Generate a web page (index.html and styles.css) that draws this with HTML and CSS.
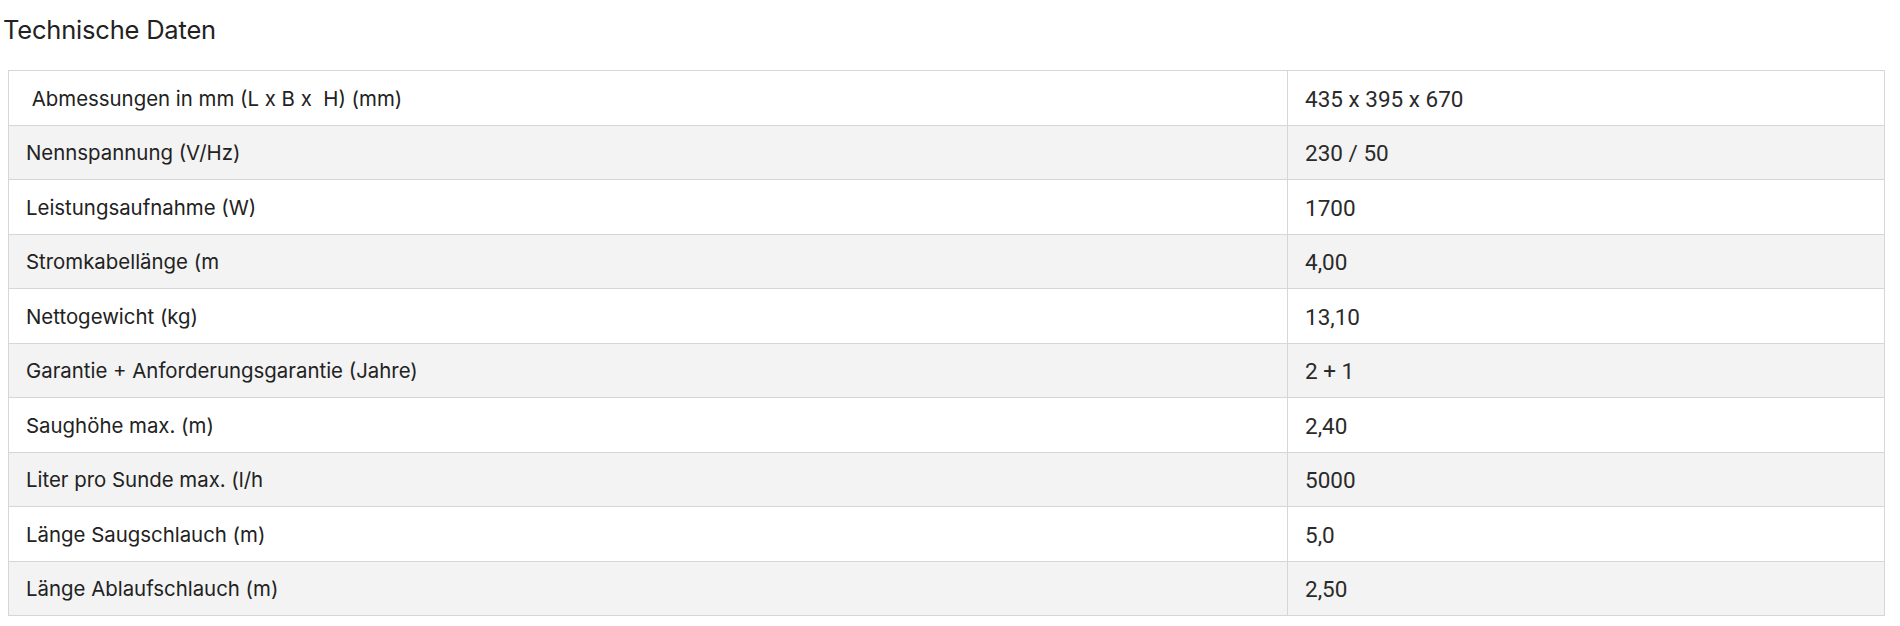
FILE: index.html
```html
<!DOCTYPE html>
<html lang="de">
<head>
<meta charset="utf-8">
<title>Technische Daten</title>
<link rel="stylesheet" href="styles.css">
</head>
<body>
<section class="specs">
  <h2 class="specs-title">Technische Daten</h2>
  <table class="specs-table">
    <colgroup><col class="col-label"><col class="col-value"></colgroup>
    <tbody>
      <tr><td class="label">&nbsp;Abmessungen in mm (L x B x &nbsp;H) (mm)</td><td class="value">435 x 395 x 670</td></tr>
      <tr><td class="label">Nennspannung (V/Hz)</td><td class="value">230 / 50</td></tr>
      <tr><td class="label">Leistungsaufnahme (W)</td><td class="value">1700</td></tr>
      <tr><td class="label">Stromkabellänge (m</td><td class="value">4,00</td></tr>
      <tr><td class="label">Nettogewicht (kg)</td><td class="value">13,10</td></tr>
      <tr><td class="label">Garantie + Anforderungsgarantie (Jahre)</td><td class="value">2 + 1</td></tr>
      <tr><td class="label">Saughöhe max. (m)</td><td class="value">2,40</td></tr>
      <tr><td class="label">Liter pro Sunde max. (l/h</td><td class="value">5000</td></tr>
      <tr><td class="label">Länge Saugschlauch (m)</td><td class="value">5,0</td></tr>
      <tr><td class="label">Länge Ablaufschlauch (m)</td><td class="value">2,50</td></tr>
    </tbody>
  </table>
</section>
</body>
</html>
```
FILE: styles.css
```css
html, body {
  margin: 0;
  padding: 0;
  background: #ffffff;
}
body {
  font-family: Inter, "Liberation Sans", sans-serif;
  color: #222222;
}
.specs {
  padding: 0 0 0 3px;
}
.specs-title {
  margin: 0;
  padding-top: 14px;
  font-size: 25.5px;
  line-height: 32px;
  font-weight: 400;
  color: #222222;
  letter-spacing: -0.2px;
}
.specs-table {
  margin: 24px 0 0 5px;
  width: 1877px;
  border-collapse: collapse;
  table-layout: fixed;
  font-size: 20.4px;
}
.col-label { width: 1279px; }
.specs-table td {
  border: 1px solid #d6d6d6;
  height: 54.5px;
  padding: 2px 17px 0 17px;
  vertical-align: middle;
  box-sizing: border-box;
  line-height: 24px;
}
.specs-table tr:nth-child(even) td {
  background: #f3f3f3;
}
.value {
  font-family: Roboto, "Liberation Sans", sans-serif;
  font-size: 22.5px;
  color: #2a2a2a;
}
```
